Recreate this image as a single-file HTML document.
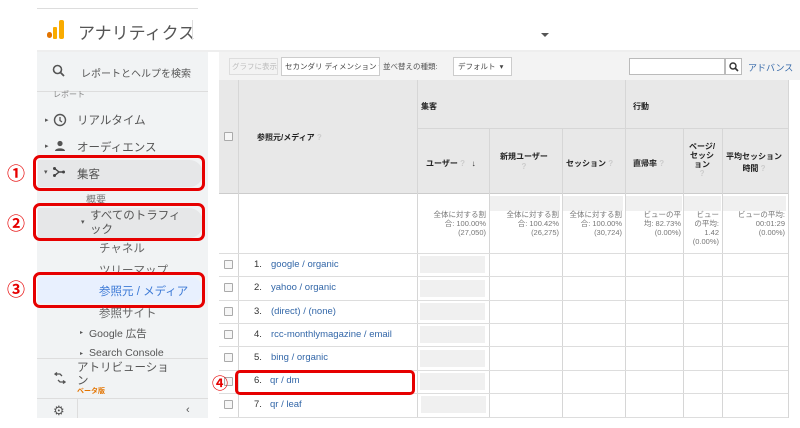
<!DOCTYPE html><html><head><meta charset="utf-8"><style>
*{margin:0;padding:0;box-sizing:border-box}
body{width:800px;height:428px;background:#fff;position:relative;overflow:hidden;font-family:"Liberation Sans","Noto Sans CJK JP",sans-serif;color:#444}
.a{position:absolute;white-space:nowrap}
.side{left:37px;top:52px;width:171px;height:366px;background:#f1f3f4}
.t{font-size:11.5px;color:#555;white-space:nowrap}
.rb{border:3px solid #e60000;border-radius:7px}
.num{color:#e60000;font-size:18px;font-weight:bold}
.gray{background:#e8e8e8}
.vl{width:1px;background:#d6d6d6}
.hl{height:1px;background:#ddd}
.lnk{color:#3367a8;font-size:9.5px}
.rn{font-size:9.5px;color:#333}
.cb{width:9px;height:9px;border:1px solid #aaa;background:#f6f6f6;border-radius:1px}
.hd{font-size:8px;font-weight:bold;color:#222}
.sm{font-size:7.5px;color:#777;text-align:right;line-height:9px}
.ph{background:#f0f0f0}
.tb{overflow:hidden;line-height:12px}
</style></head><body>
<div class="a" style="left:37px;top:8px;width:161px;height:1px;background:#ddd"></div>
<div class="a" style="left:47px;top:32px;width:5px;height:6px;background:#e37400;border-radius:3px"></div>
<div class="a" style="left:53px;top:27px;width:4px;height:12px;background:#f9ab00;border-radius:1px"></div>
<div class="a" style="left:59px;top:20px;width:5px;height:19px;background:#f9ab00;border-radius:2px"></div>
<div class="a" style="left:78px;top:19px;font-size:17px;color:#555">アナリティクス</div>
<div class="a" style="left:192px;top:20px;width:1px;height:20px;background:#ddd"></div>
<div class="a" style="left:541px;top:33px;width:0;height:0;border-left:4px solid transparent;border-right:4px solid transparent;border-top:4px solid #555"></div>
<div class="a" style="left:37px;top:50px;width:763px;height:2px;background:#eee"></div>
<div class="a side"></div>
<svg class="a" style="left:52px;top:64px" width="14" height="14"><circle cx="5.5" cy="5.5" r="4" stroke="#555" stroke-width="1.6" fill="none"/><path d="M8.5 8.5L12 12" stroke="#555" stroke-width="1.8"/></svg>
<div class="a t" style="left:81px;top:65px;font-size:10px">レポートとヘルプを検索</div>
<div class="a" style="left:37px;top:91px;width:171px;height:1px;background:#ddd"></div>
<div class="a t" style="left:53px;top:89px;font-size:8px;color:#888">レポート</div>
<div class="a t" style="left:45px;top:116px;font-size:7px">▸</div>
<svg class="a" style="left:53px;top:113px" width="14" height="14"><circle cx="7" cy="7" r="5.5" stroke="#555" stroke-width="1.4" fill="none"/><path d="M7 4v3.5l2 1.5" stroke="#555" stroke-width="1.3" fill="none"/></svg>
<div class="a t" style="left:77px;top:112px">リアルタイム</div>
<div class="a t" style="left:45px;top:142px;font-size:7px">▸</div>
<svg class="a" style="left:54px;top:140px" width="12" height="12"><circle cx="6" cy="3.5" r="2.6" fill="#555"/><path d="M1 11c0-3.5 10-3.5 10 0z" fill="#555"/></svg>
<div class="a t" style="left:77px;top:139px">オーディエンス</div>
<div class="a" style="left:38px;top:160px;width:165px;height:27px;background:#e6e7e8;border-radius:0 14px 14px 0"></div>
<div class="a rb" style="left:33px;top:155px;width:172px;height:36px"></div>
<div class="a num" style="left:7px;top:160px">①</div>
<div class="a t" style="left:44px;top:168px;font-size:7px">▾</div>
<svg class="a" style="left:53px;top:167px" width="12" height="10"><path d="M1 1L6 5L1 9M6 5H11" stroke="#444" stroke-width="1.4" fill="none"/><circle cx="1.5" cy="1.5" r="1.5" fill="#444"/><circle cx="1.5" cy="8.5" r="1.5" fill="#444"/><circle cx="10.5" cy="5" r="1.5" fill="#444"/></svg>
<div class="a t" style="left:77px;top:166px">集客</div>
<div class="a t" style="left:86px;top:191px;font-size:10px;color:#777">概要</div>
<div class="a" style="left:38px;top:208px;width:165px;height:30px;background:#e6e7e8;border-radius:0 14px 14px 0"></div>
<div class="a rb" style="left:33px;top:203px;width:172px;height:38px"></div>
<div class="a num" style="left:7px;top:210px">②</div>
<div class="a t" style="left:81px;top:218px;font-size:7px">▾</div>
<div class="a t" style="left:90px;top:207px">すべてのトラフィ</div>
<div class="a t" style="left:90px;top:221px">ック</div>
<div class="a t" style="left:99px;top:240px;color:#666">チャネル</div>
<div class="a t" style="left:99px;top:262px;color:#666">ツリーマップ</div>
<div class="a" style="left:38px;top:277px;width:165px;height:26px;background:#e8f0fe;border-radius:0 14px 14px 0"></div>
<div class="a rb" style="left:33px;top:272px;width:172px;height:36px"></div>
<div class="a num" style="left:7px;top:276px">③</div>
<div class="a t" style="left:99px;top:283px;color:#3d7ad6">参照元 / メディア</div>
<div class="a t" style="left:99px;top:305px;color:#666">参照サイト</div>
<div class="a t" style="left:80px;top:329px;font-size:6px">▸</div>
<div class="a t" style="left:89px;top:326px;font-size:10.5px">Google 広告</div>
<div class="a t" style="left:80px;top:350px;font-size:6px">▸</div>
<div class="a t" style="left:89px;top:347px;font-size:10.5px">Search Console</div>
<div class="a" style="left:37px;top:358px;width:171px;height:1px;background:#ddd"></div>
<svg class="a" style="left:54px;top:372px" width="12" height="12"><path d="M1 2h5l2 2M3 0.5L1 2L3 3.5M11 10H6L4 8M9 8.5L11 10L9 11.5" stroke="#555" stroke-width="1.3" fill="none"/></svg>
<div class="a t" style="left:77px;top:359px">アトリビューショ</div>
<div class="a t" style="left:77px;top:372px">ン</div>
<div class="a" style="left:77px;top:386px;font-size:7px;color:#e37400;font-weight:bold">ベータ版</div>
<div class="a" style="left:37px;top:398px;width:171px;height:1px;background:#ddd"></div>
<div class="a" style="left:77px;top:399px;width:1px;height:19px;background:#ddd"></div>
<div class="a" style="left:53px;top:403px;font-size:13px;color:#555">⚙</div>
<div class="a" style="left:186px;top:404px;font-size:11px;color:#555">‹</div>
<div class="a" style="left:219px;top:52px;width:581px;height:28px;background:#f3f3f3"></div>
<div class="a tb" style="left:229px;top:58px;width:49px;height:17px;border:1px solid #ddd;font-size:7.5px;color:#bbb;padding:2px 2px">グラフに表示</div>
<div class="a tb" style="left:281px;top:57px;width:99px;height:19px;border:1px solid #ccc;background:#fff;font-size:7.5px;padding:3px 3px;color:#444">セカンダリ ディメンション ▾</div>
<div class="a" style="left:383px;top:61px;font-size:7.5px;color:#555">並べ替えの種類:</div>
<div class="a tb" style="left:453px;top:57px;width:59px;height:19px;border:1px solid #ccc;background:#fff;font-size:7.5px;padding:3px 4px;color:#444">デフォルト &nbsp;▾</div>
<div class="a" style="left:629px;top:58px;width:96px;height:17px;border:1px solid #bbb;background:#fff"></div>
<div class="a" style="left:725px;top:58px;width:17px;height:17px;border:1px solid #bbb;background:#fff"></div>
<svg class="a" style="left:729px;top:62px" width="10" height="10"><circle cx="4" cy="4" r="3" stroke="#333" stroke-width="1.4" fill="none"/><path d="M6 6L9 9" stroke="#333" stroke-width="1.6"/></svg>
<div class="a" style="left:748px;top:61px;font-size:9px;color:#3367a8">アドバンス</div>
<div class="a gray" style="left:219px;top:80px;width:569px;height:113px"></div>
<div class="a hl" style="left:219px;top:193px;width:569px;background:#ccc"></div>
<div class="a hl" style="left:417px;top:128px;width:371px;background:#d6d6d6"></div>
<div class="a vl" style="left:238px;top:80px;height:338px"></div>
<div class="a vl" style="left:417px;top:80px;height:338px"></div>
<div class="a vl" style="left:625px;top:80px;height:338px"></div>
<div class="a vl" style="left:489px;top:128px;height:290px"></div>
<div class="a vl" style="left:562px;top:128px;height:290px"></div>
<div class="a vl" style="left:683px;top:128px;height:290px"></div>
<div class="a vl" style="left:722px;top:128px;height:290px"></div>
<div class="a vl" style="left:788px;top:80px;height:338px"></div>
<div class="a cb" style="left:224px;top:132px"></div>
<div class="a hd" style="left:257px;top:132px">参照元/メディア <span style="color:#ccc">?</span></div>
<div class="a hd" style="left:421px;top:101px">集客</div>
<div class="a hd" style="left:633px;top:101px">行動</div>
<div class="a hd" style="left:426px;top:158px">ユーザー <span style="color:#ccc">?</span> &nbsp; ↓</div>
<div class="a hd" style="left:500px;top:151px;text-align:center">新規ユーザー<br><span style="color:#ccc">?</span></div>
<div class="a hd" style="left:566px;top:158px">セッション <span style="color:#ccc">?</span></div>
<div class="a hd" style="left:633px;top:158px">直帰率 <span style="color:#ccc">?</span></div>
<div class="a hd" style="left:689px;top:142px;text-align:center;line-height:9px">ページ/<br>セッシ<br>ョン<br><span style="color:#ccc">?</span></div>
<div class="a hd" style="left:726px;top:151px;line-height:12px;text-align:center">平均セッション<br>時間 <span style="color:#ccc">?</span></div>
<div class="a ph" style="left:490px;top:196px;width:70px;height:15px"></div>
<div class="a ph" style="left:563px;top:196px;width:60px;height:15px"></div>
<div class="a ph" style="left:626px;top:196px;width:56px;height:15px"></div>
<div class="a ph" style="left:684px;top:196px;width:37px;height:15px"></div>
<div class="a ph" style="left:723px;top:196px;width:63px;height:15px"></div>
<div class="a sm" style="left:418px;top:210px;width:68px">全体に対する割<br>合: 100.00%<br>(27,050)</div>
<div class="a sm" style="left:490px;top:210px;width:69px">全体に対する割<br>合: 100.42%<br>(26,275)</div>
<div class="a sm" style="left:563px;top:210px;width:59px">全体に対する割<br>合: 100.00%<br>(30,724)</div>
<div class="a sm" style="left:626px;top:210px;width:55px">ビューの平<br>均: 82.73%<br>(0.00%)</div>
<div class="a sm" style="left:684px;top:210px;width:35px">ビュー<br>の平均:<br>1.42<br>(0.00%)</div>
<div class="a sm" style="left:723px;top:210px;width:62px">ビューの平均:<br>00:01:29<br>(0.00%)</div>
<div class="a hl" style="left:219px;top:253px;width:569px"></div>
<div class="a hl" style="left:219px;top:276px;width:569px"></div>
<div class="a hl" style="left:219px;top:300px;width:569px"></div>
<div class="a hl" style="left:219px;top:323px;width:569px"></div>
<div class="a hl" style="left:219px;top:346px;width:569px"></div>
<div class="a hl" style="left:219px;top:370px;width:569px"></div>
<div class="a hl" style="left:219px;top:393px;width:569px"></div>
<div class="a hl" style="left:219px;top:417px;width:569px"></div>
<div class="a ph" style="left:420px;top:256px;width:65px;height:17px"></div>
<div class="a ph" style="left:420px;top:280px;width:65px;height:17px"></div>
<div class="a ph" style="left:420px;top:303px;width:65px;height:17px"></div>
<div class="a ph" style="left:420px;top:326px;width:65px;height:17px"></div>
<div class="a ph" style="left:420px;top:350px;width:65px;height:17px"></div>
<div class="a ph" style="left:420px;top:373px;width:65px;height:17px"></div>
<div class="a ph" style="left:421px;top:396px;width:65px;height:17px"></div>
<div class="a cb" style="left:224px;top:260px"></div><div class="a rn" style="left:254px;top:259px">1.</div><div class="a lnk" style="left:271px;top:259px">google / organic</div>
<div class="a cb" style="left:224px;top:283px"></div><div class="a rn" style="left:254px;top:282px">2.</div><div class="a lnk" style="left:271px;top:282px">yahoo / organic</div>
<div class="a cb" style="left:224px;top:307px"></div><div class="a rn" style="left:254px;top:306px">3.</div><div class="a lnk" style="left:271px;top:306px">(direct) / (none)</div>
<div class="a cb" style="left:224px;top:330px"></div><div class="a rn" style="left:254px;top:329px">4.</div><div class="a lnk" style="left:271px;top:329px">rcc-monthlymagazine / email</div>
<div class="a cb" style="left:224px;top:353px"></div><div class="a rn" style="left:254px;top:352px">5.</div><div class="a lnk" style="left:271px;top:352px">bing / organic</div>
<div class="a cb" style="left:224px;top:377px"></div><div class="a rn" style="left:254px;top:375px">6.</div><div class="a lnk" style="left:270px;top:375px">qr / dm</div>
<div class="a cb" style="left:224px;top:400px"></div><div class="a rn" style="left:254px;top:399px">7.</div><div class="a lnk" style="left:270px;top:399px">qr / leaf</div>
<div class="a" style="left:235px;top:370px;width:180px;height:25px;border:3px solid #e60000;border-radius:5px;background:transparent"></div>
<div class="a num" style="left:212px;top:370px;font-size:16px">④</div>
</body></html>
